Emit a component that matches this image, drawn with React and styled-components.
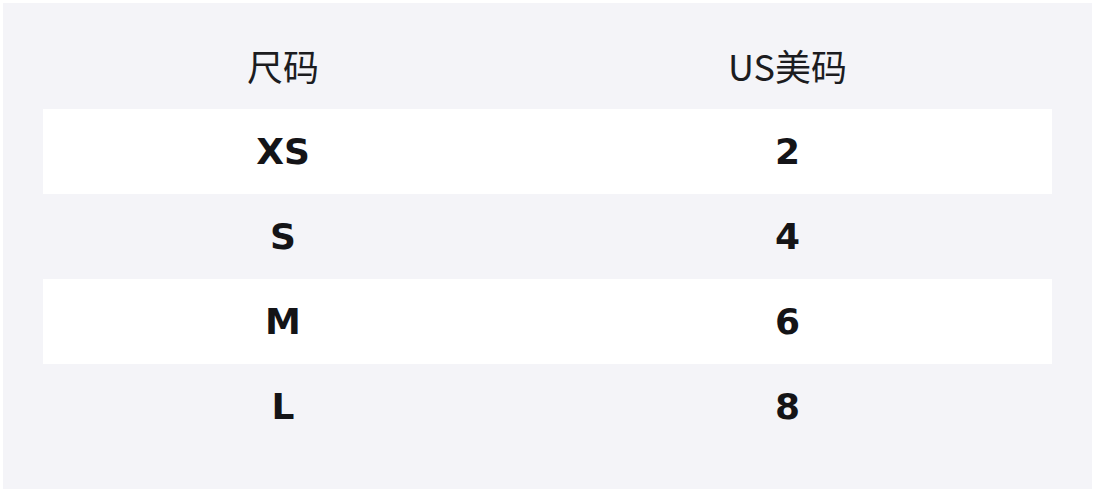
import React from 'react';
import styled, { createGlobalStyle } from 'styled-components';

const GlobalStyle = createGlobalStyle`
  html, body {
    margin: 0;
    padding: 0;
    background: #ffffff;
  }
  body {
    padding: 3px;
    font-family: "DejaVu Sans", "Noto Sans CJK SC", sans-serif;
  }
`;

const Panel = styled.div`
  width: 1089px;
  height: 486px;
  box-sizing: border-box;
  padding: 21px 40px 40px;
  background: #f4f4f8;
`;

const Table = styled.table`
  width: 100%;
  border-collapse: collapse;
  table-layout: fixed;
`;

const Col = styled.col`
  width: ${(p) => p.$width};
`;

const HeadCell = styled.th`
  height: 85px;
  padding: 0 0 4px;
  box-sizing: border-box;
  text-align: center;
  font-family: "Noto Sans CJK SC", sans-serif;
  font-weight: 400;
  font-size: 36px;
  color: #1c1c1f;
`;

const Row = styled.tr`
  background: ${(p) => (p.$striped ? '#ffffff' : 'transparent')};
`;

const Cell = styled.td`
  height: 85px;
  padding: 0;
  text-align: center;
  font-family: "DejaVu Sans", sans-serif;
  font-weight: 700;
  font-size: 36px;
  color: #141417;
`;

const sizes = [
  { size: 'XS', us: '2' },
  { size: 'S', us: '4' },
  { size: 'M', us: '6' },
  { size: 'L', us: '8' },
];

const App = () => {
  return (
    <>
      <GlobalStyle />
      <Panel>
        <Table>
          <colgroup>
            <Col $width="480px" />
            <Col $width="auto" />
          </colgroup>
          <thead>
            <tr>
              <HeadCell>尺码</HeadCell>
              <HeadCell>US美码</HeadCell>
            </tr>
          </thead>
          <tbody>
            {sizes.map((row, i) => (
              <Row key={row.size} $striped={i % 2 === 0}>
                <Cell>{row.size}</Cell>
                <Cell>{row.us}</Cell>
              </Row>
            ))}
          </tbody>
        </Table>
      </Panel>
    </>
  );
};

export default App;
